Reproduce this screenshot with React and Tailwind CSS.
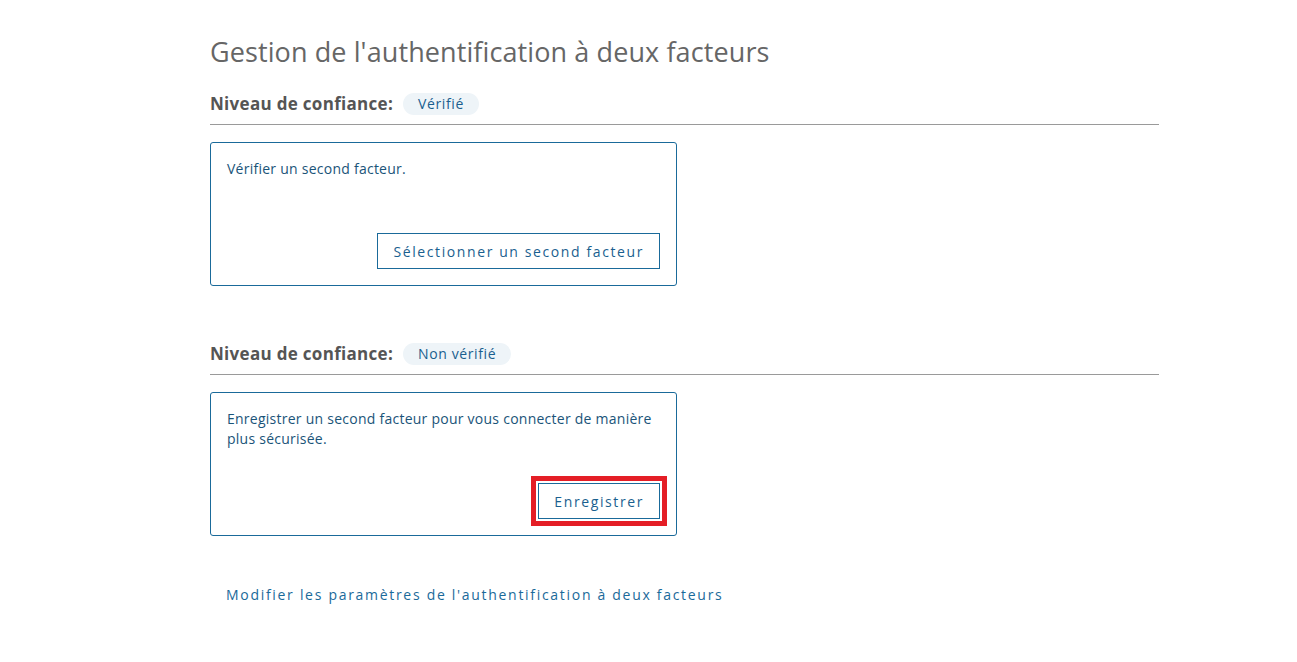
export default function App() {
  const font = { fontFamily: '"Open Sans", "Noto Sans", sans-serif' };
  return (
    <div className="min-h-[662px] bg-white" style={font}>
      <div className="ml-[210px] w-[949px] pt-[34px]">
        <h1 className="text-[27px] leading-[36px] tracking-[0.1px] text-[#666666] font-normal">
          Gestion de l'authentification à deux facteurs
        </h1>

        <div className="mt-[23px] flex items-center gap-[10px] pb-[9px] border-b border-[#9a9a9a]">
          <span className="text-[17px] font-bold text-[#555555] leading-[22px] tracking-[0.3px]">Niveau de confiance:</span>
          <span className="rounded-full bg-[#eef4f8] px-[15px] h-[22px] leading-[22px] text-[14px] tracking-[0.6px] text-[#1a5f8f]">
            Vérifié
          </span>
        </div>

        <div className="mt-[17px] w-[467px] h-[144px] rounded-[3px] border border-[#1a6a9a] px-[16px] pt-[16px] pb-[16px] flex flex-col">
          <p className="text-[14px] leading-[20px] tracking-[0.25px] text-[#1a5479]">Vérifier un second facteur.</p>
          <div className="mt-auto flex justify-end">
            <button className="h-[36px] px-[15px] border border-[#1a6a9a] text-[14px] tracking-[1.6px] text-[#1a5f8f] bg-white">
              Sélectionner un second facteur
            </button>
          </div>
        </div>

        <div className="mt-[57px] flex items-center gap-[10px] pb-[9px] border-b border-[#9a9a9a]">
          <span className="text-[17px] font-bold text-[#555555] leading-[22px] tracking-[0.3px]">Niveau de confiance:</span>
          <span className="rounded-full bg-[#eef4f8] px-[15px] h-[22px] leading-[22px] text-[14px] tracking-[0.6px] text-[#1a5f8f]">
            Non vérifié
          </span>
        </div>

        <div className="mt-[17px] w-[467px] h-[144px] rounded-[3px] border border-[#1a6a9a] px-[16px] pt-[16px] pb-[16px] flex flex-col">
          <p className="text-[14px] leading-[20px] tracking-[0.25px] text-[#1a5479]">
            Enregistrer un second facteur pour vous connecter de manière
            <br />
            plus sécurisée.
          </p>
          <div className="mt-auto flex justify-end">
            <button className="h-[36px] px-[15px] border border-[#1a6a9a] text-[14px] tracking-[1.6px] text-[#1a5f8f] bg-white outline-[5px] outline-solid outline-[#e41e26] outline-offset-[2px]">
              Enregistrer
            </button>
          </div>
        </div>

        <div className="mt-[46px] pl-[16px]">
          <a className="text-[14px] tracking-[1.7px] text-[#1a6a9a] leading-[20px] cursor-pointer">
            Modifier les paramètres de l'authentification à deux facteurs
          </a>
        </div>
      </div>
    </div>
  );
}
